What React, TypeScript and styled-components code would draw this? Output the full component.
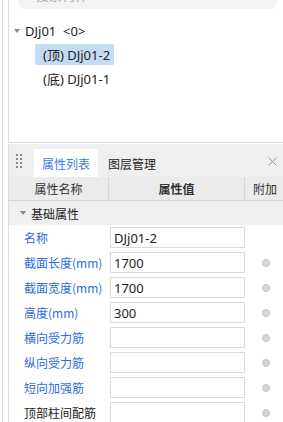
import React from "react";
import styled, { createGlobalStyle } from "styled-components";

const Global = createGlobalStyle`
  html, body { margin: 0; padding: 0; background: #fff; }
  body {
    font-family: "Noto Sans", "Noto Sans CJK SC", sans-serif;
    font-size: 13px;
    color: #222;
    overflow: hidden;
  }
  * { box-sizing: border-box; }
`;

const Page = styled.div`
  display: flex;
  width: 283px;
  height: 422px;
  overflow: hidden;
`;

const Rail = styled.div`
  width: 6px;
  margin-left: 2px;
  border-left: 1px solid #dcdcdc;
  flex: none;
`;

const Main = styled.div`
  flex: 1;
  display: flex;
  flex-direction: column;
  min-width: 0;
`;

const TopPanel = styled.div`
  height: 143px;
  border-left: 1px solid #dcdcdc;
  border-bottom: 1px solid #dcdcdc;
  display: flex;
  flex-direction: column;
  flex: none;
`;

const Search = styled.div`
  height: 28px;
  margin: -19px 6px 0 9px;
  background: #f3f3f3;
  border-radius: 8px;
  display: flex;
  align-items: flex-end;
  justify-content: space-between;
  padding: 0 14px 7px 18px;
  color: #aaa;
  font-size: 13px;
  line-height: 14px;
`;

const Tree = styled.div`
  display: flex;
  flex-direction: column;
  padding: 10px 0 0 5px;
`;

const TreeRow = styled.div<{ $indent: number; $selected?: boolean }>`
  display: flex;
  align-items: center;
  align-self: flex-start;
  height: 21px;
  margin: 1px 0 2px ${(p) => p.$indent}px;
  padding: 0 4px 0 ${(p) => (p.$indent ? 8 : 0)}px;
  border-radius: 2px;
  background: ${(p) => (p.$selected ? "#c4dbf4" : "transparent")};
  color: #222;
  white-space: pre;
`;

const Caret = styled.span`
  display: inline-block;
  width: 0;
  height: 0;
  border-left: 3px solid transparent;
  border-right: 3px solid transparent;
  border-top: 4px solid #8a8a8a;
  margin-right: 5px;
`;

const BottomPanel = styled.div`
  flex: 1;
  margin-top: 1px;
  border-left: 1px solid #dcdcdc;
  display: flex;
  flex-direction: column;
  font-family: "Noto Sans CJK SC", sans-serif;
  font-size: 12px;
`;

const TabBar = styled.div`
  height: 33px;
  background: #efeff0;
  display: flex;
  align-items: flex-end;
  padding-left: 6px;
`;

const Grip = styled.svg`
  width: 8px;
  height: 16px;
  margin: 0 11px 8px 0;
`;

const Tab = styled.div<{ $active?: boolean }>`
  height: 28px;
  padding: 0 8px;
  display: flex;
  align-items: center;
  background: ${(p) => (p.$active ? "#fff" : "transparent")};
  color: ${(p) => (p.$active ? "#3a7be8" : "#222")};
  margin-right: 2px;
`;

const Close = styled.svg`
  width: 9px;
  height: 9px;
  margin: 0 6px 11px auto;
`;

const Grid = styled.div`
  display: grid;
  grid-template-columns: 100px 136px 1fr;
`;

const HeadCell = styled.div<{ $bold?: boolean; $last?: boolean }>`
  height: 24px;
  background: #ebebeb;
  border-bottom: 1px solid #d6d6d6;
  border-right: ${(p) => (p.$last ? "none" : "1px solid #d6d6d6")};
  display: flex;
  align-items: center;
  justify-content: ${(p) => (p.$last ? "flex-start" : "center")};
  padding-left: ${(p) => (p.$last ? "8px" : "0")};
  font-weight: ${(p) => (p.$bold ? 700 : 400)};
  color: #333;
  white-space: nowrap;
  overflow: hidden;
`;

const GroupRow = styled.div`
  grid-column: 1 / -1;
  height: 24px;
  background: #f0f0f0;
  display: flex;
  align-items: center;
  padding-left: 11px;
  color: #222;
`;

const Label = styled.div<{ $plain?: boolean }>`
  height: 25px;
  display: flex;
  align-items: center;
  padding-left: 15px;
  color: ${(p) => (p.$plain ? "#222" : "#2d6ce0")};
  white-space: nowrap;
`;

const ValueCell = styled.div`
  height: 25px;
  display: flex;
  align-items: center;
  padding-left: 1px;
`;

const Input = styled.div`
  width: 135px;
  height: 21px;
  border: 1px solid #dadada;
  display: flex;
  align-items: center;
  padding-left: 3px;
  color: #222;
  font-family: "Noto Sans", sans-serif;
  font-size: 13px;
`;

const ExtraCell = styled.div`
  height: 25px;
  display: flex;
  align-items: center;
  padding-left: 17px;
`;

const Dot = styled.span`
  width: 8px;
  height: 8px;
  border-radius: 50%;
  background: #d6d6d6;
  border: 1px solid #c6c6c6;
`;

const rows: { label: string; value: string; dot: boolean; plain?: boolean }[] = [
  { label: "名称", value: "DJj01-2", dot: false },
  { label: "截面长度(mm)", value: "1700", dot: true },
  { label: "截面宽度(mm)", value: "1700", dot: true },
  { label: "高度(mm)", value: "300", dot: true },
  { label: "横向受力筋", value: "", dot: true },
  { label: "纵向受力筋", value: "", dot: true },
  { label: "短向加强筋", value: "", dot: true },
  { label: "顶部柱间配筋", value: "", dot: true, plain: true },
];

export default function App() {
  return (
    <Page>
      <Global />
      <Rail />
      <Main>
        <TopPanel>
          <Search>
            <span>搜索构件...</span>
            <span>⌕</span>
          </Search>
          <Tree>
            <TreeRow $indent={0}>
              <Caret />
              {"DJj01  <0>"}
            </TreeRow>
            <TreeRow $indent={21} $selected>
              {"(顶) DJj01-2"}
            </TreeRow>
            <TreeRow $indent={21}>{"(底) DJj01-1"}</TreeRow>
          </Tree>
        </TopPanel>
        <BottomPanel>
          <TabBar>
            <Grip viewBox="0 0 8 16">
              {[0, 1, 2, 3].map((r) =>
                [0, 1].map((c) => (
                  <rect key={`${r}-${c}`} x={c * 4 + 1} y={r * 4 + 1} width="2" height="2" fill="#8c8c8c" />
                ))
              )}
            </Grip>
            <Tab $active>属性列表</Tab>
            <Tab>图层管理</Tab>
            <Close viewBox="0 0 9 9">
              <path d="M0.5 0.5 L8.5 8.5 M8.5 0.5 L0.5 8.5" stroke="#9a9a9a" strokeWidth="1" />
            </Close>
          </TabBar>
          <Grid>
            <HeadCell>属性名称</HeadCell>
            <HeadCell $bold>属性值</HeadCell>
            <HeadCell $last>附加</HeadCell>
            <GroupRow>
              <Caret />
              基础属性
            </GroupRow>
            {rows.map((r) => (
              <React.Fragment key={r.label}>
                <Label $plain={r.plain}>{r.label}</Label>
                <ValueCell>
                  <Input>{r.value}</Input>
                </ValueCell>
                <ExtraCell>{r.dot && <Dot />}</ExtraCell>
              </React.Fragment>
            ))}
          </Grid>
        </BottomPanel>
      </Main>
    </Page>
  );
}
